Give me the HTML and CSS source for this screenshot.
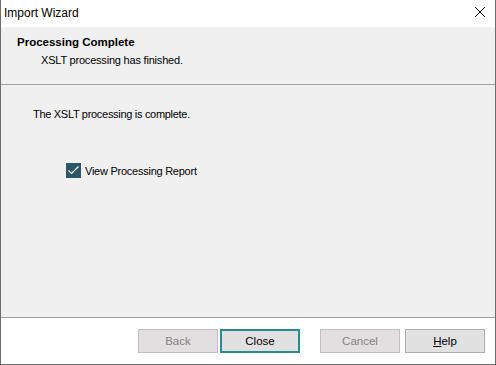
FILE: index.html
```html
<!DOCTYPE html>
<html>
<head>
    <meta charset="UTF-8">
    <title>Import Wizard</title>
    <link rel="stylesheet" href="styles.css">
</head>
<body>
    <div class="window">
        <div class="titlebar">
            <span class="title">Import Wizard</span>
            <svg class="close-x" width="12" height="12" viewBox="0 0 12 12">
                <path d="M1 1 L11 11 M11 1 L1 11" stroke="#000" stroke-width="1" fill="none"/>
            </svg>
        </div>

        <div class="header">
            <div class="header-title">Processing Complete</div>
            <div class="header-sub">XSLT processing has finished.</div>
        </div>

        <div class="content">
            <p class="message">The XSLT processing is complete.</p>
            <label class="check">
                <span class="box">
                    <svg width="15" height="15" viewBox="0 0 15 15">
                        <path d="M2.5 7.5 L5.5 10.5 L12.5 3.5" stroke="#fff" stroke-width="1.2" fill="none"/>
                    </svg>
                </span>
                View Processing Report
            </label>
        </div>

        <div class="footer">
            <button class="btn disabled">Back</button>
            <button class="btn default">Close</button>
            <button class="btn disabled gap">Cancel</button>
            <button class="btn"><u>H</u>elp</button>
        </div>
    </div>
</body>
</html>
```

FILE: styles.css
```css
html, body {
    margin: 0;
    padding: 0;
    background: #fff;
}

body {
    font-family: "Liberation Sans", Arial, sans-serif;
    font-size: 11.5px;
    color: #000;
}

.window {
    width: 496px;
    height: 365px;
    box-sizing: border-box;
    border: 1px solid #6d6d6d;
    border-top: none;
    display: flex;
    flex-direction: column;
    overflow: hidden;
}

.titlebar {
    height: 27px;
    background: #fff;
    display: flex;
    align-items: center;
    justify-content: space-between;
    padding: 0 9px 0 3px;
    flex-shrink: 0;
}

.title {
    font-size: 12px;
    margin-top: -2px;
}

.close-x {
    margin-top: -3px;
}

.header {
    height: 58px;
    background: #f0f0f0;
    border-bottom: 1px solid #a0a0a0;
    box-shadow: 0 1px 0 #fff;
    padding: 6px 0 0 16px;
    box-sizing: border-box;
    flex-shrink: 0;
}

.header-title {
    font-weight: bold;
    line-height: 18px;
}

.header-sub {
    margin-left: 24px;
    line-height: 18px;
    font-size: 11px;
    letter-spacing: -0.2px;
}

.content {
    flex: 1;
    background: #f0f0f0;
    padding: 20px 0 0 32px;
    border-bottom: 1px solid #a0a0a0;
}

.message {
    margin: 0;
    line-height: 18px;
    font-size: 11px;
    letter-spacing: -0.3px;
}

.check {
    display: flex;
    align-items: center;
    gap: 4px;
    margin: 40px 0 0 33px;
    font-size: 11px;
    letter-spacing: -0.25px;
}

.box {
    width: 15px;
    height: 15px;
    background: #2b5665;
    display: flex;
}

.footer {
    height: 46px;
    background: #fff;
    flex-shrink: 0;
    display: flex;
    align-items: center;
    padding-left: 137px;
    padding-bottom: 1px;
    box-sizing: border-box;
}

.btn {
    width: 80px;
    height: 24px;
    margin-right: 2px;
    background: #e1e1e1;
    border: 1px solid #adadad;
    font-family: "Liberation Sans", Arial, sans-serif;
    font-size: 11.5px;
    color: #000;
    padding: 0;
}

.btn.disabled {
    background: #e1dfdf;
    border-color: #bfbfbf;
    color: #838383;
}

.btn.default {
    border: 2px solid #2a8b8f;
}

.btn.gap {
    margin-left: 18px;
    margin-right: 5px;
}
```
